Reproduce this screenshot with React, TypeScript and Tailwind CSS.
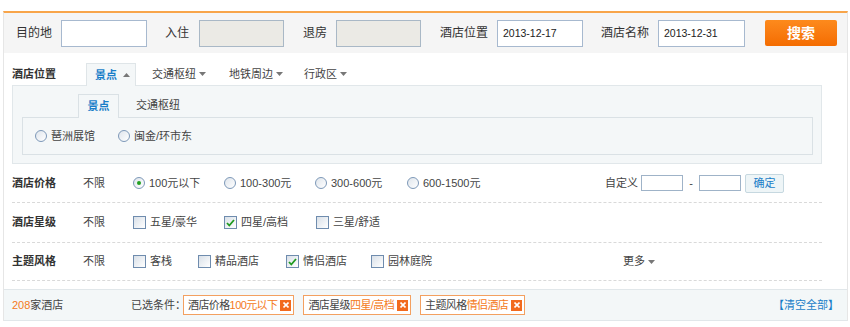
import React from "react";

const Down = () => (
  <svg width="7" height="4" viewBox="0 0 7 4" className="ml-[3px]">
    <path d="M0 0h7L3.5 4z" fill="#777" />
  </svg>
);
const Up = () => (
  <svg width="7" height="4" viewBox="0 0 7 4" className="ml-[6px]">
    <path d="M0 4h7L3.5 0z" fill="#777" />
  </svg>
);

const Radio = ({ checked = false }: { checked?: boolean }) => (
  <span className="flex h-[12px] w-[12px] shrink-0 items-center justify-center rounded-full border border-[#7d98b8] bg-gradient-to-br from-[#dfe5ec] to-white">
    {checked && <span className="h-[4px] w-[4px] rounded-full bg-[#22a022]" />}
  </span>
);

const Check = ({ checked = false }: { checked?: boolean }) => (
  <span className="flex h-[13px] w-[13px] shrink-0 items-center justify-center border border-[#6f8cae] bg-gradient-to-br from-[#d9e0e8] to-white">
    {checked && (
      <svg width="9" height="8" viewBox="0 0 9 8">
        <path d="M1 4l2.3 2.5L8 1" stroke="#1f9a1f" strokeWidth="1.8" fill="none" />
      </svg>
    )}
  </span>
);

const Opt = ({ w, radio, checked, label }: { w: string; radio?: boolean; checked?: boolean; label: string }) => (
  <div className={`flex items-center ${w}`}>
    {radio ? <Radio checked={checked} /> : <Check checked={checked} />}
    <span className="ml-[4px]">{label}</span>
  </div>
);

const Tag = ({ k, v }: { k: string; v: string }) => (
  <div className="mr-[9px] flex h-[20px] shrink-0 items-center whitespace-nowrap border border-[#f3a060] bg-white pl-[4px] pr-[2px] tracking-[-0.6px]">
    <span className="text-[#444]">{k}</span>
    <span className="text-[#f47a22]">{v}</span>
    <span className="ml-[3px] flex h-[11px] w-[11px] items-center justify-center bg-[#f26a1e]">
      <svg width="6" height="6" viewBox="0 0 6 6">
        <path d="M0.5 0.5l5 5M5.5 0.5l-5 5" stroke="#fff" strokeWidth="1.6" />
      </svg>
    </span>
  </div>
);

export default function App() {
  return (
    <div className="h-[327px] w-[850px] overflow-hidden bg-white pl-[3px] pr-[2px] pt-[11px] font-['Liberation_Sans','Noto_Sans_CJK_SC',sans-serif] text-[11px] leading-none text-[#444]">
      <div className="border-x border-t-2 border-x-[#e6e6e6] border-t-[#f8a54a]">
        {/* search bar */}
        <div className="flex h-[40px] items-center bg-[#f5f5f5] pl-[12px] text-[12px] text-[#333]">
          <span className="w-[45px]">目的地</span>
          <div className="h-[27px] w-[86px] border border-[#a7b9cf] bg-white" />
          <span className="ml-[18px] w-[34px]">入住</span>
          <div className="h-[27px] w-[85px] border border-[#a9b8c6] bg-[#ebeae5]" />
          <span className="ml-[19px] w-[33px]">退房</span>
          <div className="h-[27px] w-[85px] border border-[#a9b8c6] bg-[#ebeae5]" />
          <span className="ml-[19px] w-[57px]">酒店位置</span>
          <div className="flex h-[27px] w-[86px] items-center border border-[#a7b9cf] bg-white pl-[5px] text-[10.5px] text-[#222]">2013-12-17</div>
          <span className="ml-[18px] w-[57px]">酒店名称</span>
          <div className="flex h-[27px] w-[87px] items-center border border-[#a7b9cf] bg-white pl-[5px] text-[10.5px] text-[#222]">2013-12-31</div>
          <button className="ml-[20px] flex h-[26px] w-[72px] items-center justify-center rounded-[2px] bg-gradient-to-b from-[#fd8a1c] to-[#f46c00] text-[14px] font-bold text-white">
            搜索
          </button>
        </div>

        {/* filters */}
        <div className="pl-[8px] pr-[25px]">
          <div className="mt-[10px] flex h-[22px] items-stretch">
            <div className="flex w-[74px] items-center font-bold text-[#333]">酒店位置</div>
            <div className="relative z-10 -mb-px flex w-[50px] items-center border border-b-0 border-[#dfe5e8] bg-[#f4f7f8] pl-[8px] font-bold text-[#1a7ec8]">
              景点
              <Up />
            </div>
            <div className="ml-[16px] flex w-[77px] items-center">
              交通枢纽
              <Down />
            </div>
            <div className="flex w-[75px] items-center">
              地铁周边
              <Down />
            </div>
            <div className="flex items-center">
              行政区
              <Down />
            </div>
          </div>
          <div className="border border-[#e1e7ea] bg-[#f4f7f8] pb-[8px] pl-[9px] pr-[8px] pt-[8px]">
            <div className="flex h-[23px] items-stretch">
              <div className="relative z-10 -mb-px ml-[56px] flex w-[41px] items-center justify-center border border-b-0 border-[#dae1e5] bg-[#f4f7f8] font-bold text-[#1a7ec8]">
                景点
              </div>
              <div className="ml-[17px] flex items-center">交通枢纽</div>
            </div>
            <div className="flex h-[38px] items-center border border-[#dae1e5] pl-[12px]">
              <Opt w="w-[83px]" radio label="琶洲展馆" />
              <Opt w="w-[100px]" radio label="闽金/环市东" />
            </div>
          </div>

          <div className="flex h-[39px] items-center border-b border-dashed border-[#d9d9d9]">
            <div className="w-[71px] font-bold text-[#333]">酒店价格</div>
            <div className="w-[50px]">不限</div>
            <Opt w="w-[91px]" radio checked label="100元以下" />
            <Opt w="w-[91px]" radio label="100-300元" />
            <Opt w="w-[92px]" radio label="300-600元" />
            <Opt w="w-[100px]" radio label="600-1500元" />
            <div className="ml-auto mr-[38px] flex items-center">
              <span className="mr-[3px]">自定义</span>
              <div className="h-[16px] w-[42px] border border-[#9fb3c8] bg-white" />
              <span className="w-[16px] text-center">-</span>
              <div className="h-[16px] w-[42px] border border-[#9fb3c8] bg-white" />
              <div className="ml-[4px] flex h-[19px] w-[39px] items-center justify-center rounded-[2px] border border-[#c6d8e0] bg-[#eef5f7] text-[#1a7ec8]">
                确定
              </div>
            </div>
          </div>

          <div className="flex h-[40px] items-center border-b border-dashed border-[#d9d9d9]">
            <div className="w-[71px] font-bold text-[#333]">酒店星级</div>
            <div className="w-[50px]">不限</div>
            <Opt w="w-[91px]" label="五星/豪华" />
            <Opt w="w-[92px]" checked label="四星/高档" />
            <Opt w="w-[100px]" label="三星/舒适" />
          </div>

          <div className="flex h-[38px] items-center border-b border-dashed border-[#d9d9d9]">
            <div className="w-[71px] font-bold text-[#333]">主题风格</div>
            <div className="w-[50px]">不限</div>
            <Opt w="w-[65px]" label="客栈" />
            <Opt w="w-[88px]" label="精品酒店" />
            <Opt w="w-[85px]" checked label="情侣酒店" />
            <Opt w="w-[252px]" label="园林庭院" />
            <div className="flex items-center">
              更多
              <Down />
            </div>
          </div>
        </div>

        {/* footer */}
        <div className="mt-[8px] flex h-[32px] items-center whitespace-nowrap border-y border-[#e1e7ea] bg-[#f3f7f8] pl-[8px] pr-[8px]">
          <div className="w-[119px] shrink-0">
            <span className="text-[#f47a22]">208</span>家酒店
          </div>
          <span className="w-[52px] shrink-0">已选条件：</span>
          <Tag k="酒店价格" v="100元以下" />
          <Tag k="酒店星级" v="四星/高档" />
          <Tag k="主题风格" v="情侣酒店" />
          <span className="ml-auto text-[#1a7ec8]">【清空全部】</span>
        </div>
      </div>
    </div>
  );
}
